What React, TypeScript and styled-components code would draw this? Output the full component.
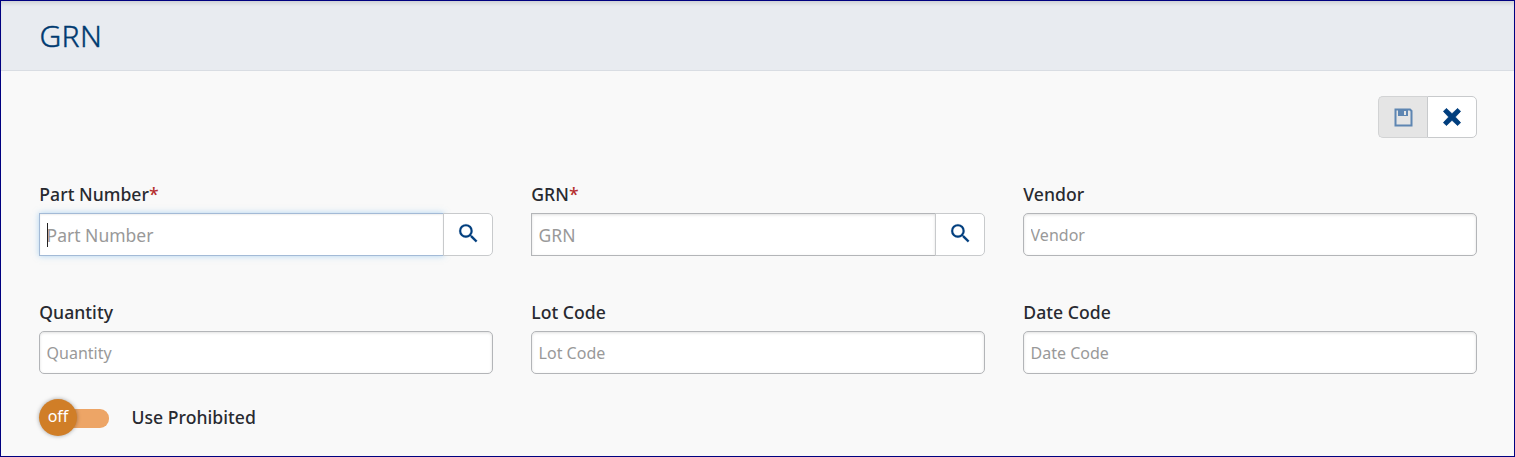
import React from "react";
import styled, { createGlobalStyle, css } from "styled-components";

const GlobalStyle = createGlobalStyle`
  *, *::before, *::after { box-sizing: border-box; }
  body {
    margin: 0;
    background: #f9f9f9;
    font-family: "Noto Sans", sans-serif;
    color: #282a30;
  }
`;

const Page = styled.div`
  height: 457px;
  border: 1px solid #000080;
  background: #f9f9f9;
  overflow: hidden;
`;

const Header = styled.header`
  height: 70px;
  padding: 0 38.5px;
  display: flex;
  align-items: center;
  background: #e8ebf0;
  border-bottom: 1px solid #d9dde3;
  box-shadow: inset 0 4px 4px -2px rgba(0, 0, 0, 0.13);
`;

const Title = styled.h1`
  margin: 0;
  font-size: 30px;
  line-height: 40px;
  font-weight: 300;
  letter-spacing: 0.4px;
  -webkit-text-stroke: 0.4px currentColor;
  color: #003a70;
`;

const Toolbar = styled.div`
  display: flex;
  justify-content: flex-end;
  padding: 25px 37px 0;
`;

const ToolButton = styled.button`
  width: 50px;
  height: 42px;
  padding: 0;
  display: flex;
  align-items: center;
  justify-content: center;
  border: 1px solid #c8cacc;
  border-radius: 0 5px 5px 0;
  background: #fff;
  color: #003e7e;

  &:disabled {
    width: 49px;
    border-right: 0;
    border-color: #d2d3d4;
    border-radius: 5px 0 0 5px;
    background: #e5e5e5;
    color: #5e86b2;
  }
`;

const Form = styled.form`
  display: grid;
  grid-template-columns: repeat(3, 1fr);
  column-gap: 38px;
  row-gap: 43px;
  padding: 43px 37px 0 38px;
`;

const Field = styled.div`
  display: flex;
  flex-direction: column;
`;

const Label = styled.label`
  height: 32px;
  padding-left: 0.3px;
  font-size: 17.6px;
  line-height: 26px;
  font-weight: 500;
  letter-spacing: 0.03px;
  white-space: nowrap;
`;

const Required = styled.span`
  color: #b5302e;
`;

const Control = styled.div`
  display: flex;
  position: relative;
`;

const Input = styled.input<{ $lookup?: boolean; $focused?: boolean }>`
  flex: 1;
  min-width: 0;
  height: 43px;
  padding: 0 7px 0 6.6px;
  border: 1px solid #b3b5b8;
  border-radius: ${(p) => (p.$lookup ? "0" : "5px")};
  background: #fff;
  box-shadow: inset 0 1px 3px rgba(0, 0, 0, 0.12);
  font: 400 ${(p) => (p.$lookup ? "17.5px" : "16px")} "Noto Sans", sans-serif;
  outline: 0;

  &::placeholder {
    color: #999;
    opacity: 1;
  }

  ${(p) =>
    p.$focused &&
    css`
      border-color: #a3bad6;
      box-shadow: inset 0 1px 2px rgba(0, 0, 0, 0.07), 0 0 6px rgba(102, 175, 233, 0.5);
    `}
`;

const Caret = styled.span`
  position: absolute;
  left: 8px;
  top: 10px;
  width: 1px;
  height: 24px;
  background: #222;
`;

const LookupButton = styled.button`
  width: 50px;
  height: 43px;
  margin-left: -1px;
  padding: 0 0 2px;
  display: flex;
  align-items: center;
  justify-content: center;
  position: relative;
  border: 1px solid #c8cacc;
  border-radius: 0 5px 5px 0;
  background: #fff;
  color: #003e7e;
`;

const ToggleRow = styled.div`
  display: flex;
  align-items: center;
  height: 38px;
  padding-left: 38px;
  margin-top: 24px;
`;

const Switch = styled.div`
  display: flex;
  align-items: center;
  width: 70px;
  margin-right: 22.5px;
`;

const Knob = styled.span`
  flex: none;
  width: 38px;
  height: 37px;
  padding-bottom: 2px;
  display: flex;
  align-items: center;
  justify-content: center;
  border-radius: 50%;
  background: #d07e27;
  box-shadow: 0 0 4px rgba(0, 0, 0, 0.35);
  color: #fff;
  font-size: 16px;
  z-index: 1;
`;

const Track = styled.span`
  flex: 1;
  height: 19px;
  margin: 2px 0 0 -8px;
  border-radius: 0 9px 9px 0;
  background: #eda566;
`;

const ToggleLabel = styled.span`
  font-size: 17.6px;
  line-height: 26px;
  font-weight: 500;
  letter-spacing: 0.03px;
`;

const SearchIcon = () => (
  <svg width="25" height="25" viewBox="0 0 24 24" fill="currentColor">
    <path
      stroke="currentColor"
      strokeWidth="0.15"
      d="M15.5 14h-.79l-.28-.27A6.471 6.471 0 0 0 16 9.5 6.5 6.5 0 1 0 9.5 16c1.61 0 3.09-.59 4.23-1.57l.27.28v.79l5 4.99L20.49 19l-4.99-5zm-6 0C7.01 14 5 11.99 5 9.5S7.01 5 9.5 5 14 7.01 14 9.5 11.99 14 9.5 14z"
    />
  </svg>
);

const SaveIcon = () => (
  <svg width="19" height="19" viewBox="0 0 19 19">
    <path d="M1.5 1.5H16L17.5 3V17.5H1.5Z" fill="none" stroke="currentColor" strokeWidth="2" />
    <path fillRule="evenodd" fill="currentColor" d="M4 2H14V8H4ZM10 3V7H12V3Z" />
  </svg>
);

const CloseIcon = () => (
  <svg width="18" height="18" viewBox="0 0 18 18">
    <path
      d="M3.4 0.4 9 5.7 14.6 0.4 17.6 3.4 12.3 9 17.6 14.6 14.6 17.6 9 12.3 3.4 17.6 0.4 14.6 5.7 9 0.4 3.4Z"
      fill="currentColor"
      stroke="currentColor"
      strokeWidth="0.8"
      strokeLinejoin="round"
    />
  </svg>
);

interface FieldSpec {
  name: string;
  lookup?: boolean;
  focused?: boolean;
}

const fields: FieldSpec[] = [
  { name: "Part Number", lookup: true, focused: true },
  { name: "GRN", lookup: true },
  { name: "Vendor" },
  { name: "Quantity" },
  { name: "Lot Code" },
  { name: "Date Code" },
];

export default function App() {
  return (
    <>
      <GlobalStyle />
      <Page>
        <Header>
          <Title>GRN</Title>
        </Header>
        <Toolbar>
          <ToolButton disabled aria-label="Save">
            <SaveIcon />
          </ToolButton>
          <ToolButton aria-label="Close">
            <CloseIcon />
          </ToolButton>
        </Toolbar>
        <Form>
          {fields.map((f) => (
            <Field key={f.name}>
              <Label>
                {f.name}
                {f.lookup && <Required>*</Required>}
              </Label>
              <Control>
                <Input placeholder={f.name} $lookup={f.lookup} $focused={f.focused} />
                {f.focused && <Caret />}
                {f.lookup && (
                  <LookupButton type="button" aria-label={`Search ${f.name}`}>
                    <SearchIcon />
                  </LookupButton>
                )}
              </Control>
            </Field>
          ))}
        </Form>
        <ToggleRow>
          <Switch role="switch" aria-checked={false}>
            <Knob>off</Knob>
            <Track />
          </Switch>
          <ToggleLabel>Use Prohibited</ToggleLabel>
        </ToggleRow>
      </Page>
    </>
  );
}
